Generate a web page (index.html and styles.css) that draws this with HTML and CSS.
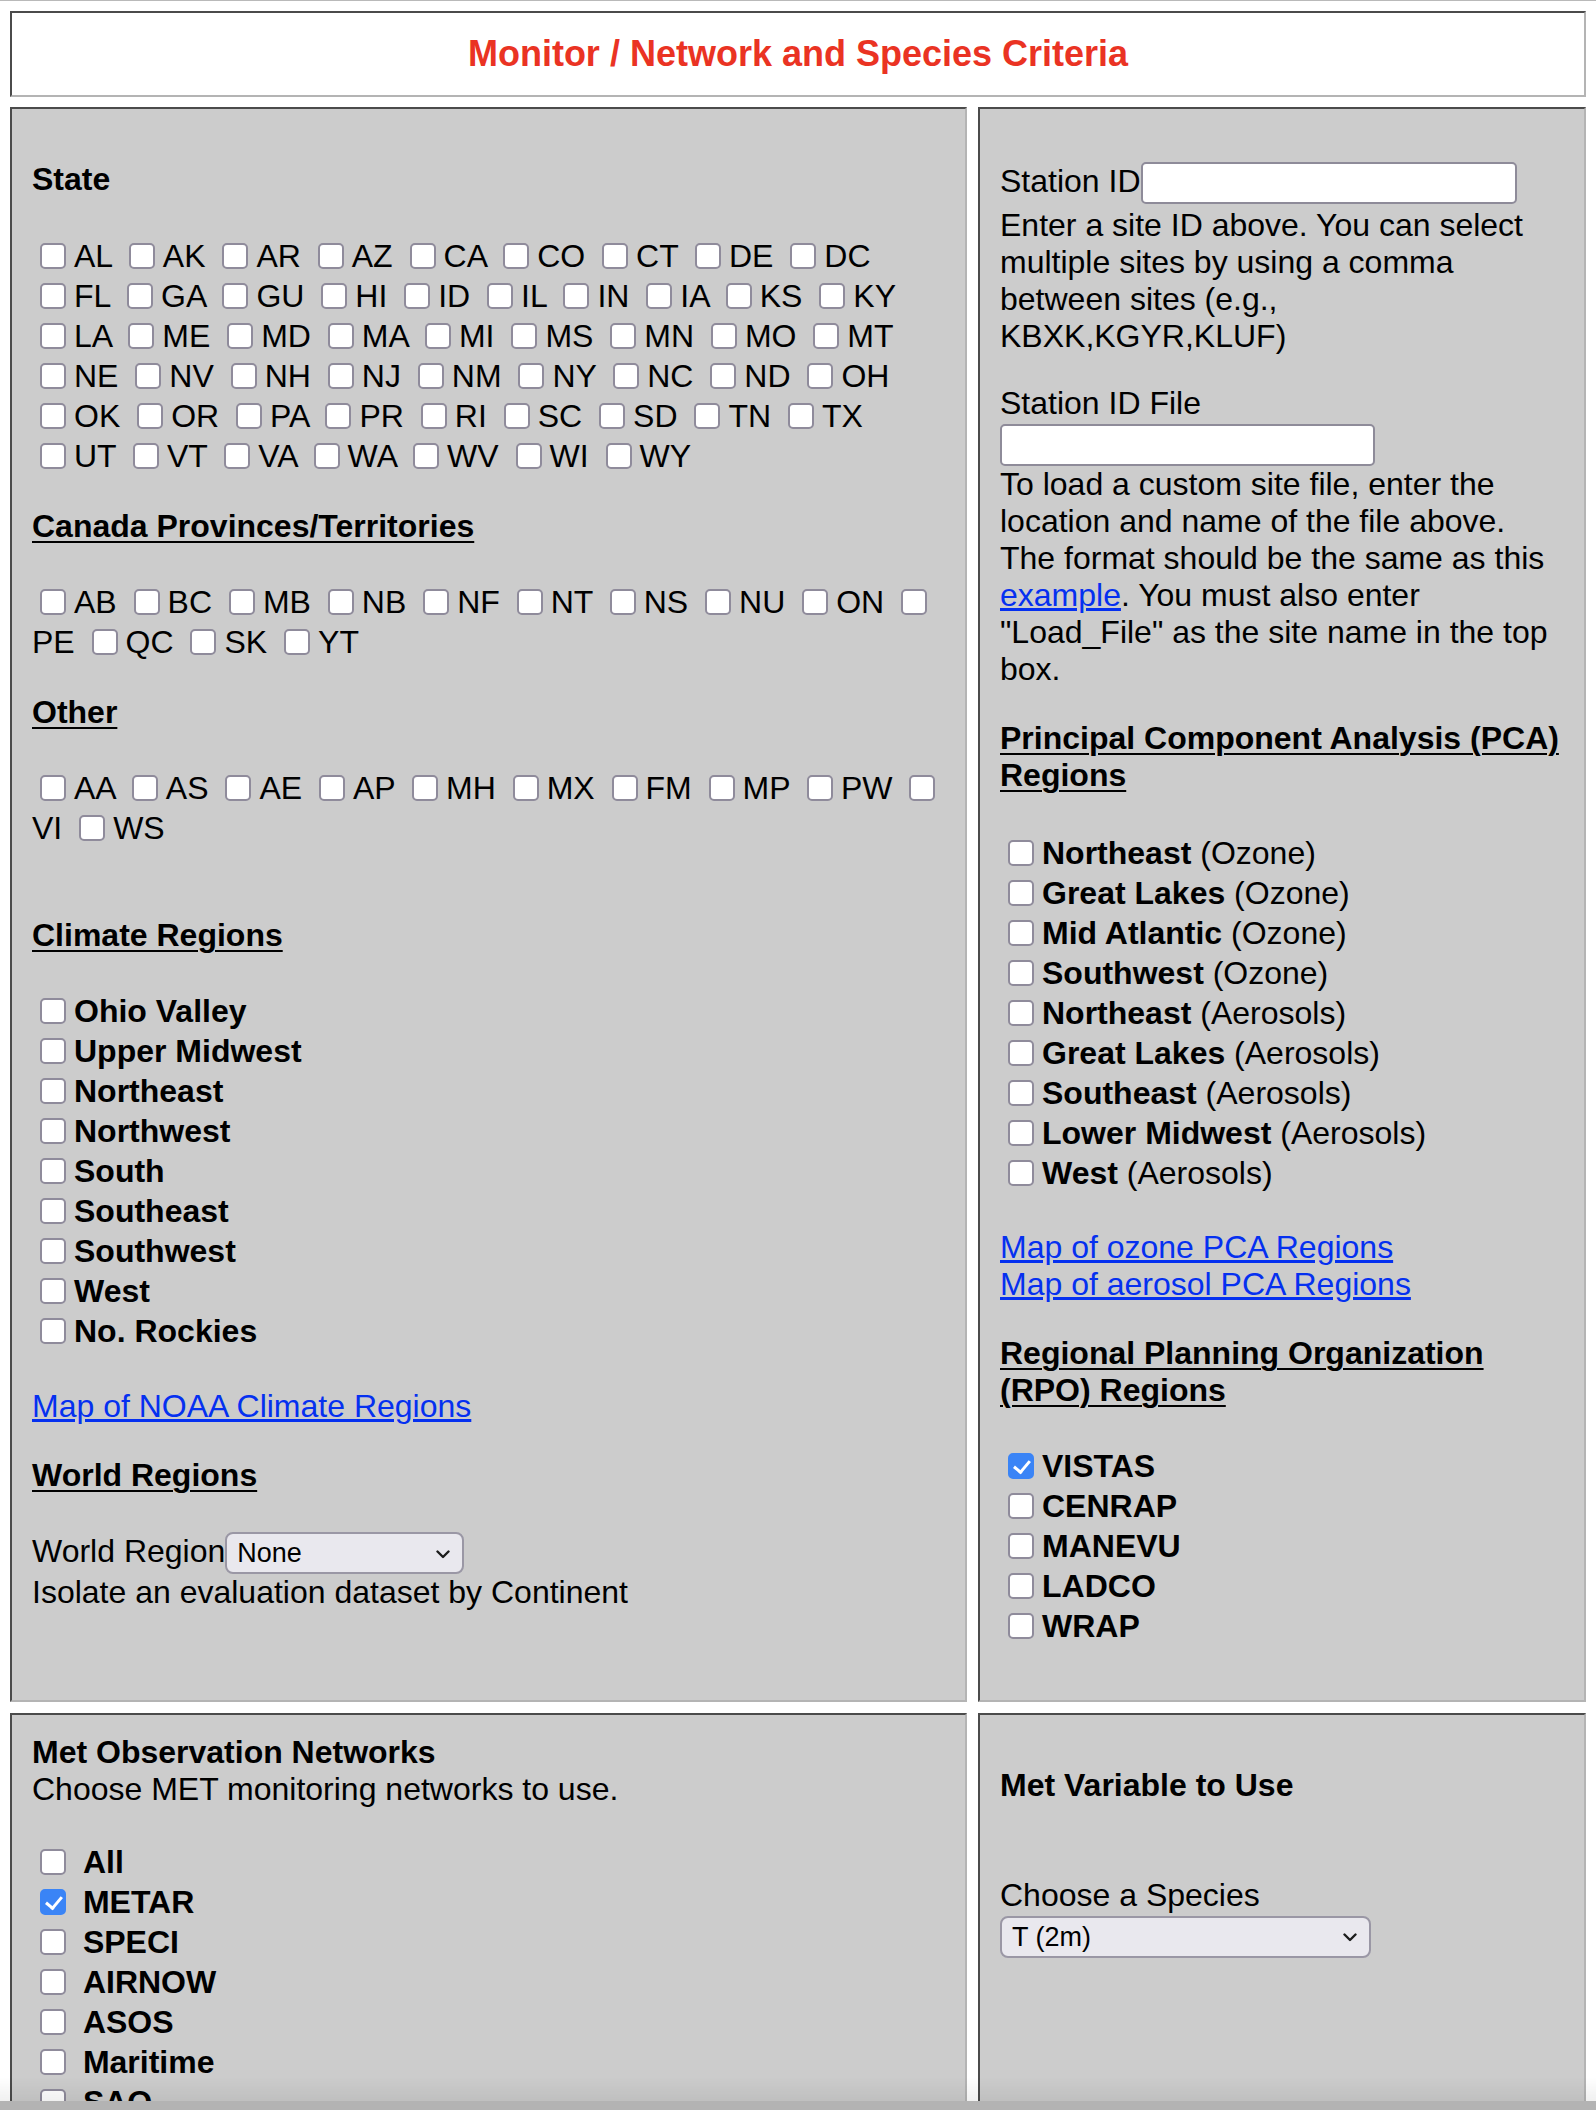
FILE: index.html
```html
<!DOCTYPE html>
<html lang="en">
<head>
  <meta charset="UTF-8" />
  <meta name="viewport" content="width=device-width, initial-scale=1.0"/>
  <title>Monitor / Network and Species Criteria</title>
  <link rel="stylesheet" href="styles.css">
</head>
<body>
<div class="page">

  <!-- Title -->
  <div class="title">Monitor / Network and Species Criteria</div>

  <div class="grid">

    <!-- Site selection (left) -->
    <section class="panel">
      <p class="head">State</p>
      <div class="boxes states">
        <label><input type="checkbox" class="cb">AL</label>
        <label><input type="checkbox" class="cb">AK</label>
        <label><input type="checkbox" class="cb">AR</label>
        <label><input type="checkbox" class="cb">AZ</label>
        <label><input type="checkbox" class="cb">CA</label>
        <label><input type="checkbox" class="cb">CO</label>
        <label><input type="checkbox" class="cb">CT</label>
        <label><input type="checkbox" class="cb">DE</label>
        <label><input type="checkbox" class="cb">DC</label><br>
        <label><input type="checkbox" class="cb">FL</label>
        <label><input type="checkbox" class="cb">GA</label>
        <label><input type="checkbox" class="cb">GU</label>
        <label><input type="checkbox" class="cb">HI</label>
        <label><input type="checkbox" class="cb">ID</label>
        <label><input type="checkbox" class="cb">IL</label>
        <label><input type="checkbox" class="cb">IN</label>
        <label><input type="checkbox" class="cb">IA</label>
        <label><input type="checkbox" class="cb">KS</label>
        <label><input type="checkbox" class="cb">KY</label><br>
        <label><input type="checkbox" class="cb">LA</label>
        <label><input type="checkbox" class="cb">ME</label>
        <label><input type="checkbox" class="cb">MD</label>
        <label><input type="checkbox" class="cb">MA</label>
        <label><input type="checkbox" class="cb">MI</label>
        <label><input type="checkbox" class="cb">MS</label>
        <label><input type="checkbox" class="cb">MN</label>
        <label><input type="checkbox" class="cb">MO</label>
        <label><input type="checkbox" class="cb">MT</label><br>
        <label><input type="checkbox" class="cb">NE</label>
        <label><input type="checkbox" class="cb">NV</label>
        <label><input type="checkbox" class="cb">NH</label>
        <label><input type="checkbox" class="cb">NJ</label>
        <label><input type="checkbox" class="cb">NM</label>
        <label><input type="checkbox" class="cb">NY</label>
        <label><input type="checkbox" class="cb">NC</label>
        <label><input type="checkbox" class="cb">ND</label>
        <label><input type="checkbox" class="cb">OH</label><br>
        <label><input type="checkbox" class="cb">OK</label>
        <label><input type="checkbox" class="cb">OR</label>
        <label><input type="checkbox" class="cb">PA</label>
        <label><input type="checkbox" class="cb">PR</label>
        <label><input type="checkbox" class="cb">RI</label>
        <label><input type="checkbox" class="cb">SC</label>
        <label><input type="checkbox" class="cb">SD</label>
        <label><input type="checkbox" class="cb">TN</label>
        <label><input type="checkbox" class="cb">TX</label><br>
        <label><input type="checkbox" class="cb">UT</label>
        <label><input type="checkbox" class="cb">VT</label>
        <label><input type="checkbox" class="cb">VA</label>
        <label><input type="checkbox" class="cb">WA</label>
        <label><input type="checkbox" class="cb">WV</label>
        <label><input type="checkbox" class="cb">WI</label>
        <label><input type="checkbox" class="cb">WY</label>
      </div>

      <p class="head"><span class="uline">Canada Provinces/Territories</span></p>
      <div class="boxes">
        <label><input type="checkbox" class="cb">AB</label>
        <label><input type="checkbox" class="cb">BC</label>
        <label><input type="checkbox" class="cb">MB</label>
        <label><input type="checkbox" class="cb">NB</label>
        <label><input type="checkbox" class="cb">NF</label>
        <label><input type="checkbox" class="cb">NT</label>
        <label><input type="checkbox" class="cb">NS</label>
        <label><input type="checkbox" class="cb">NU</label>
        <label><input type="checkbox" class="cb">ON</label>
        <label><input type="checkbox" class="cb">PE</label>
        <label><input type="checkbox" class="cb">QC</label>
        <label><input type="checkbox" class="cb">SK</label>
        <label><input type="checkbox" class="cb">YT</label>
      </div>

      <p class="head"><span class="uline">Other</span></p>
      <div class="boxes">
        <label><input type="checkbox" class="cb">AA</label>
        <label><input type="checkbox" class="cb">AS</label>
        <label><input type="checkbox" class="cb">AE</label>
        <label><input type="checkbox" class="cb">AP</label>
        <label><input type="checkbox" class="cb">MH</label>
        <label><input type="checkbox" class="cb">MX</label>
        <label><input type="checkbox" class="cb">FM</label>
        <label><input type="checkbox" class="cb">MP</label>
        <label><input type="checkbox" class="cb">PW</label>
        <label><input type="checkbox" class="cb">VI</label>
        <label><input type="checkbox" class="cb">WS</label>
      </div>

      <p class="head spaced"><span class="uline">Climate Regions</span></p>
      <div class="list">
        <label><input type="checkbox" class="cb"><b>Ohio Valley</b></label>
        <label><input type="checkbox" class="cb"><b>Upper Midwest</b></label>
        <label><input type="checkbox" class="cb"><b>Northeast</b></label>
        <label><input type="checkbox" class="cb"><b>Northwest</b></label>
        <label><input type="checkbox" class="cb"><b>South</b></label>
        <label><input type="checkbox" class="cb"><b>Southeast</b></label>
        <label><input type="checkbox" class="cb"><b>Southwest</b></label>
        <label><input type="checkbox" class="cb"><b>West</b></label>
        <label><input type="checkbox" class="cb"><b>No. Rockies</b></label>
      </div>

      <p class="links"><a href="#">Map of NOAA Climate Regions</a></p>

      <p class="head"><span class="uline">World Regions</span></p>
      <div class="field world">
        World Region
        <span class="pick">
          <select class="world-select">
            <option>None</option>
            <option>North America</option>
            <option>South America</option>
            <option>Europe</option>
            <option>Asia</option>
            <option>Africa</option>
            <option>Oceania</option>
          </select>
          <svg class="chev" width="14" height="9" viewBox="0 0 14 9"><path d="M1.5 1.5 L7 7 L12.5 1.5" fill="none" stroke="#1c1c1c" stroke-width="2.4" stroke-linecap="round" stroke-linejoin="round"/></svg>
        </span>
      </div>
      <p class="note last">Isolate an evaluation dataset by Continent</p>
    </section>

    <!-- Site selection (right) -->
    <section class="panel">
      <div class="field station">Station ID<input type="text" class="txt"></div>
      <p class="note help">Enter a site ID above. You can select<br>multiple sites by using a comma<br>between sites (e.g.,<br>KBXK,KGYR,KLUF)</p>

      <p class="head plain">Station ID File</p>
      <input type="text" class="txt file">
      <p class="note">To load a custom site file, enter the<br>location and name of the file above.<br>The format should be the same as this<br><a href="#">example</a>. You must also enter<br>"Load_File" as the site name in the top<br>box.</p>

      <p class="head"><span class="uline">Principal Component Analysis (PCA)<br>Regions</span></p>
      <div class="list pca">
        <label><input type="checkbox" class="cb"><b>Northeast</b> (Ozone)</label>
        <label><input type="checkbox" class="cb"><b>Great Lakes</b> (Ozone)</label>
        <label><input type="checkbox" class="cb"><b>Mid Atlantic</b> (Ozone)</label>
        <label><input type="checkbox" class="cb"><b>Southwest</b> (Ozone)</label>
        <label><input type="checkbox" class="cb"><b>Northeast</b> (Aerosols)</label>
        <label><input type="checkbox" class="cb"><b>Great Lakes</b> (Aerosols)</label>
        <label><input type="checkbox" class="cb"><b>Southeast</b> (Aerosols)</label>
        <label><input type="checkbox" class="cb"><b>Lower Midwest</b> (Aerosols)</label>
        <label><input type="checkbox" class="cb"><b>West</b> (Aerosols)</label>
      </div>

      <p class="links pca-links"><a href="#">Map of ozone PCA Regions</a><br><a href="#">Map of aerosol PCA Regions</a></p>

      <p class="head"><span class="uline">Regional Planning Organization<br>(RPO) Regions</span></p>
      <div class="list">
        <label><input type="checkbox" class="cb" checked><b>VISTAS</b></label>
        <label><input type="checkbox" class="cb"><b>CENRAP</b></label>
        <label><input type="checkbox" class="cb"><b>MANEVU</b></label>
        <label><input type="checkbox" class="cb"><b>LADCO</b></label>
        <label><input type="checkbox" class="cb"><b>WRAP</b></label>
      </div>
    </section>

    <!-- Networks -->
    <section class="panel low">
      <p class="head top"><b>Met Observation Networks</b><br>Choose MET monitoring networks to use.</p>
      <div class="list nets">
        <label><input type="checkbox" class="cb"> <b>All</b></label>
        <label><input type="checkbox" class="cb" checked> <b>METAR</b></label>
        <label><input type="checkbox" class="cb"> <b>SPECI</b></label>
        <label><input type="checkbox" class="cb"> <b>AIRNOW</b></label>
        <label><input type="checkbox" class="cb"> <b>ASOS</b></label>
        <label><input type="checkbox" class="cb"> <b>Maritime</b></label>
        <label><input type="checkbox" class="cb"> <b>SAO</b></label>
      </div>
    </section>

    <!-- Variable -->
    <section class="panel low">
      <p class="head var">Met Variable to Use</p>
      <p class="note species-label">Choose a Species</p>
      <span class="pick">
        <select class="species-select">
          <option>T (2m)</option>
          <option>RH (2m)</option>
          <option>Q (2m)</option>
          <option>WS (10m)</option>
          <option>WD (10m)</option>
          <option>Precip</option>
        </select>
        <svg class="chev" width="14" height="9" viewBox="0 0 14 9"><path d="M1.5 1.5 L7 7 L12.5 1.5" fill="none" stroke="#1c1c1c" stroke-width="2.4" stroke-linecap="round" stroke-linejoin="round"/></svg>
      </span>
    </section>

  </div>
</div>

<div class="statusbar"></div>

</body>
</html>
```

FILE: styles.css
```css
* {
  box-sizing: border-box;
}

html, body {
  margin: 0;
  padding: 0;
}

body {
  font-family: "Liberation Sans", Arial, Helvetica, sans-serif;
  font-size: 32px;
  line-height: 37px;
  color: #000;
  background-color: #fff;
}

.page {
  height: 100vh;
  overflow: hidden;
  border-top: 1px solid #b9b9b9;
  padding: 10px 10px 0;
}

.title {
  margin-bottom: 10px;
  border: 2px solid;
  border-color: #4b4b4b #b4b4b4 #b4b4b4 #4b4b4b;
  padding: 20px 0 20px;
  text-align: center;
  font-size: 36px;
  line-height: 42px;
  font-weight: bold;
  color: #ea3323;
}

.grid {
  display: grid;
  grid-template-columns: 957px 1fr;
  gap: 11px;
}

.panel {
  background-color: #ccc;
  border: 2px solid;
  border-color: #4b4b4b #b4b4b4 #b4b4b4 #4b4b4b;
  padding: 20px;
}

.panel.low {
  padding-top: 19px;
}

p {
  margin: 0;
}

.head {
  margin-top: 32px;
  font-weight: bold;
}

.head.plain {
  margin-top: 30px;
  font-weight: normal;
}

.head.spaced {
  margin-top: 69px;
}

.head.top {
  margin-top: 0;
  font-weight: normal;
}

.head.var {
  margin-top: 33px;
}

.uline {
  text-decoration: underline;
  text-underline-offset: 4px;
  text-decoration-thickness: 2px;
  white-space: nowrap;
}

a {
  color: #0530f0;
}

.links {
  margin-top: 37px;
}

.pca-links {
  margin-top: 36px;
}

/* checkbox rows */
.boxes {
  margin-top: 37px;
  line-height: 40px;
}

.boxes.states {
  margin-top: 38px;
}

.list {
  margin-top: 37px;
}

.list.pca {
  margin-top: 39px;
}

.list.nets {
  margin-top: 34px;
}

.list label {
  display: block;
  line-height: 40px;
  white-space: nowrap;
}

.cb {
  -webkit-appearance: none;
  appearance: none;
  position: relative;
  width: 26px;
  height: 26px;
  margin: 0 8px;
  border: 2px solid #8f8b9b;
  border-radius: 5px;
  background-color: #fff;
  vertical-align: -2px;
}

.cb:checked {
  background-color: #3a84f6;
  border-color: #3a84f6;
}

.cb:checked::after {
  content: "";
  position: absolute;
  left: 7px;
  top: 2px;
  width: 7px;
  height: 13px;
  border: solid #fff;
  border-width: 0 3px 3px 0;
  transform: rotate(40deg);
}

/* text fields and selects */
.field {
  display: flex;
  align-items: baseline;
}

.station {
  margin-top: 33px;
}

.world {
  margin-top: 38px;
}

.txt {
  width: 376px;
  height: 42px;
  border: 2px solid #8e8b99;
  border-radius: 5px;
  background-color: #fff;
  font: 27px "Liberation Sans", Arial, sans-serif;
  padding: 0 8px;
}

.txt.file {
  display: block;
  width: 375px;
  margin-top: 2px;
}

.note {
  white-space: nowrap;
}

.note.help {
  margin-top: 3px;
}

.note.last {
  margin-bottom: 69px;
}

.species-label {
  margin-top: 73px;
}

.pick {
  position: relative;
  display: inline-block;
}

.pick select {
  -webkit-appearance: none;
  appearance: none;
  display: block;
  height: 42px;
  border: 2px solid #9a97a5;
  border-radius: 8px;
  background-color: #e9e8ee;
  color: #000;
  font: 27px "Liberation Sans", Arial, sans-serif;
  padding: 0 40px 0 10px;
}

.world-select {
  width: 239px;
}

.species-select {
  width: 371px;
  margin-top: 2px;
}

.chev {
  position: absolute;
  right: 14px;
  top: 50%;
  margin-top: -3px;
  pointer-events: none;
}

.statusbar {
  position: fixed;
  left: 0;
  right: 0;
  bottom: 0;
  height: 9px;
  background-color: #b3b3b3;
}

.statusbar::before {
  content: "";
  position: absolute;
  left: 0;
  right: 0;
  bottom: 9px;
  height: 24px;
  background: linear-gradient(rgba(0, 0, 0, 0), rgba(0, 0, 0, 0.06));
}
```
